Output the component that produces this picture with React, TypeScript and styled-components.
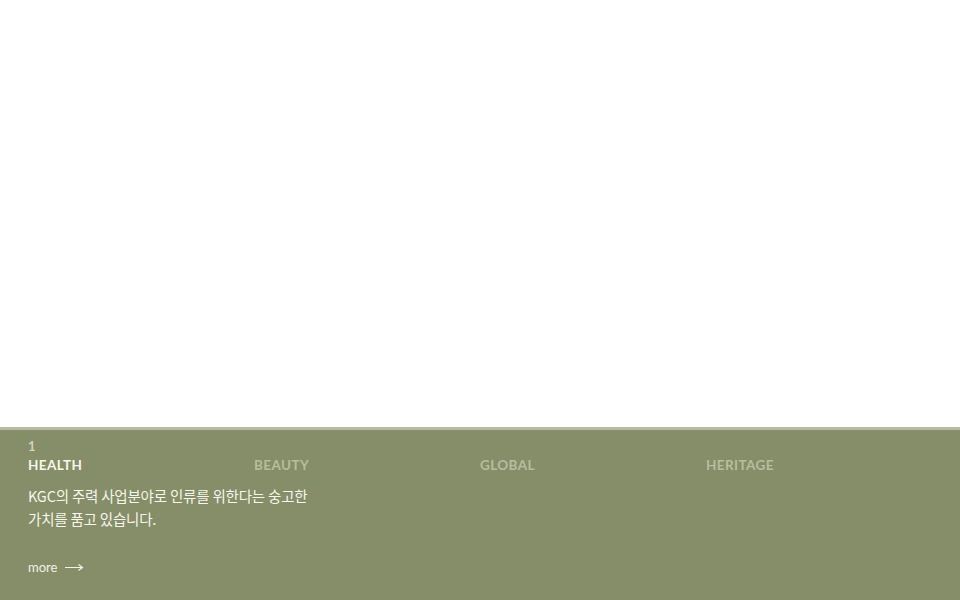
import React from 'react'
import styled, {createGlobalStyle} from 'styled-components'

const GlobalStl = createGlobalStyle`
  html, body {
    margin: 0;
    padding: 0;
    background: #fff;
  }
  body {
    font-family: "Lato", "Noto Sans CJK KR", sans-serif;
  }
`

const PageStl = styled.div`
  width: 960px;
  height: 600px;
  display: flex;
  flex-direction: column;
  overflow: hidden;
`

const HeroStl = styled.div`
  height: 427px;
  background-color: #fff;
`

const PanelStl = styled.div`
  flex: 1;
  background-color: #858d69;
  border-top: 3px solid #b7baa6;
  display: grid;
  grid-template-columns: repeat(4, 226px);
  padding: 8px 28px 0;
`

const ColumnStl = styled.div`
  display: flex;
  flex-direction: column;
`

const NumberStl = styled.div<{visible: boolean}>`
  height: 17px;
  font-family: "Lato", sans-serif;
  font-weight: 700;
  font-size: 13px;
  line-height: 17px;
  color: #d2d6b8;
  visibility: ${({visible}) => (visible ? 'visible' : 'hidden')};
`

const TitleStl = styled.div<{active: boolean}>`
  margin-top: 1px;
  font-family: "Lato", sans-serif;
  font-weight: 700;
  font-size: 13.5px;
  letter-spacing: 0.4px;
  line-height: 18px;
  color: ${({active}) => (active ? '#f6f7ea' : '#b7bd9d')};
`

const DescStl = styled.p`
  margin: 10px 0 0;
  width: 320px;
  font-family: "Noto Sans CJK KR", sans-serif;
  font-size: 14.5px;
  line-height: 23px;
  letter-spacing: -0.2px;
  color: #f6f7ea;
`

const MoreStl = styled.a`
  margin-top: 29px;
  display: flex;
  align-items: center;
  gap: 8px;
  font-family: "Lato", sans-serif;
  font-size: 13px;
  color: #f2f3e4;
  text-decoration: none;
`

const Arrow = () => (
    <svg width="19" height="8" viewBox="0 0 19 8">
        <path d="M0 4.5H17M13.5 1.5L17.5 4.5L13.5 7.5" stroke="#f2f3e4" strokeWidth="1.2" fill="none"/>
    </svg>
)

const items = ['HEALTH', 'BEAUTY', 'GLOBAL', 'HERITAGE']

export default function App() {
    return (
        <PageStl>
            <GlobalStl/>
            <HeroStl/>
            <PanelStl>
                {items.map((item, index) => (
                    <ColumnStl key={item}>
                        <NumberStl visible={index === 0}>{index + 1}</NumberStl>
                        <TitleStl active={index === 0}>{item}</TitleStl>
                        {index === 0 && (
                            <>
                                <DescStl>
                                    KGC의 주력 사업분야로 인류를 위한다는 숭고한<br/>
                                    가치를 품고 있습니다.
                                </DescStl>
                                <MoreStl href="#">more <Arrow/></MoreStl>
                            </>
                        )}
                    </ColumnStl>
                ))}
            </PanelStl>
        </PageStl>
    )
}
